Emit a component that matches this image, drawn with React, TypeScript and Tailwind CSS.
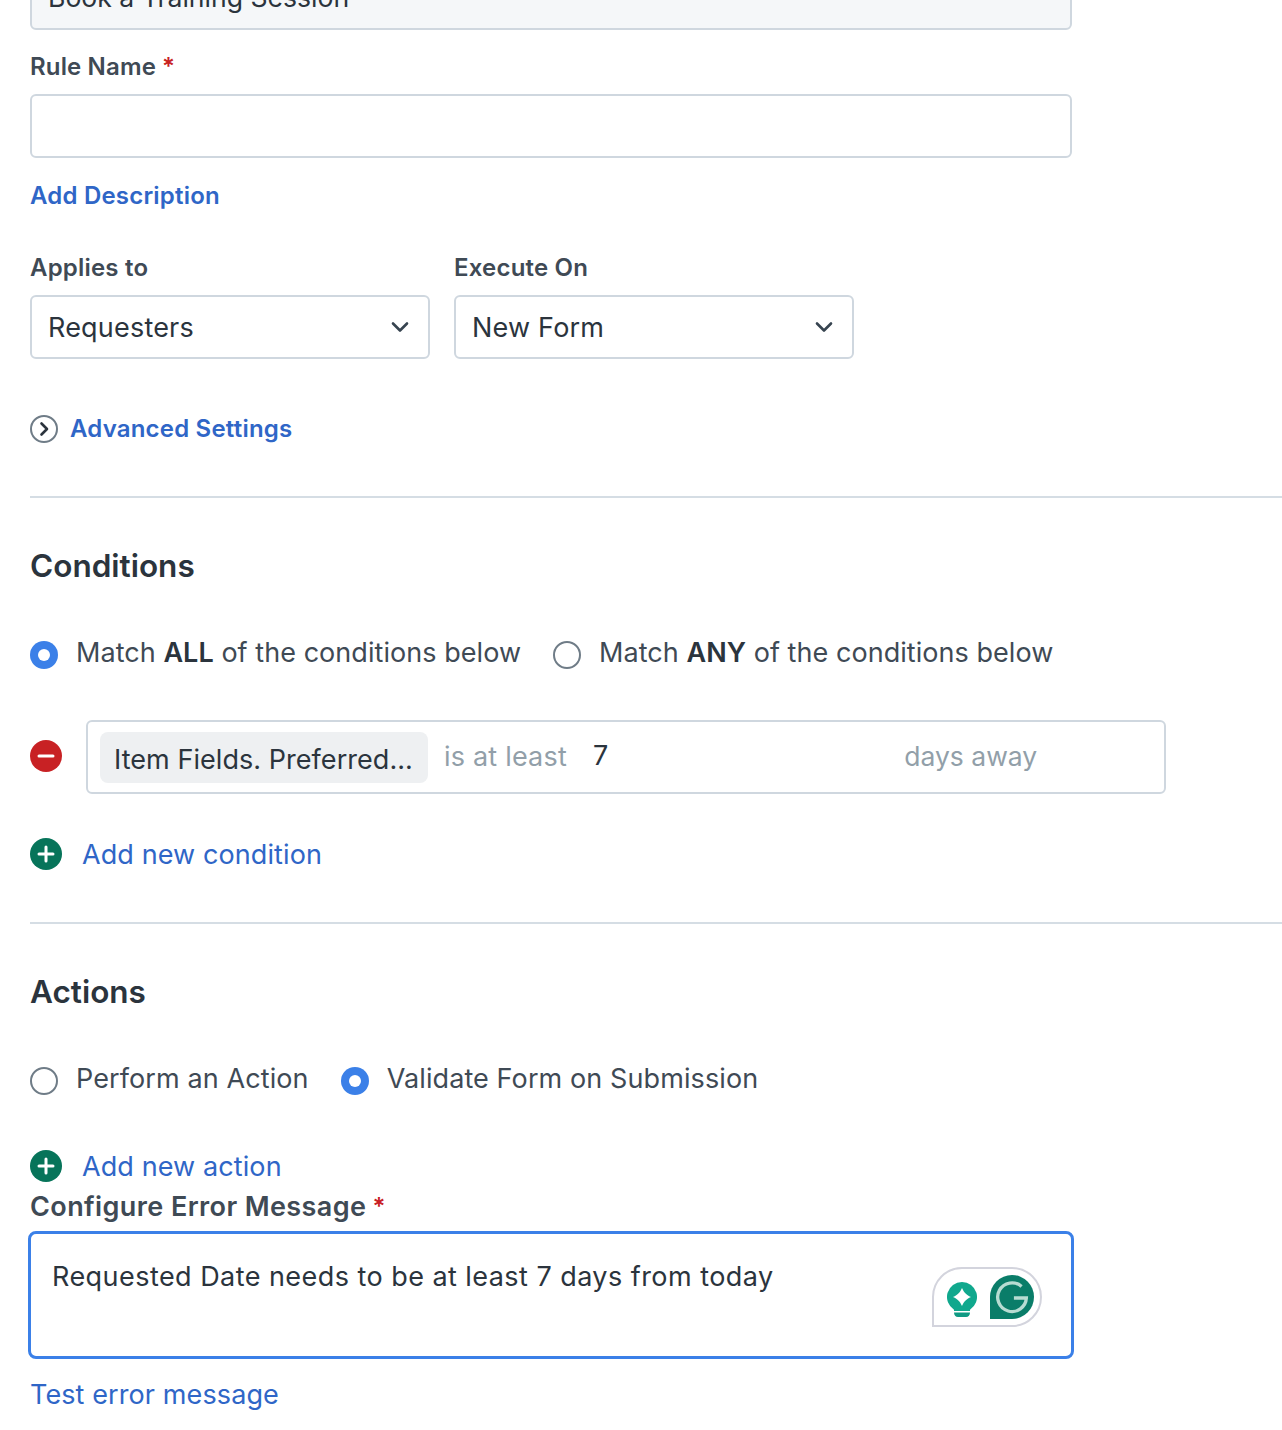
const inter = { fontFamily: 'Inter, sans-serif' };

function Radio({ checked }: { checked?: boolean }) {
  if (checked) {
    return (
      <span className="flex h-[28px] w-[28px] shrink-0 items-center justify-center rounded-full bg-[#3b80e8]">
        <span className="h-[12px] w-[12px] rounded-full bg-white" />
      </span>
    );
  }
  return <span className="h-[28px] w-[28px] shrink-0 rounded-full border-2 border-[#6f7c87] bg-white" />;
}

function RoundIcon({ type }: { type: 'plus' | 'minus' }) {
  return (
    <svg width="32" height="32" viewBox="0 0 32 32" className="shrink-0">
      <circle cx="16" cy="16" r="16" fill={type === 'plus' ? '#07745a' : '#c82124'} />
      <path d={type === 'plus' ? 'M9 16h14M16 9v14' : 'M9 16h14'} stroke="white" strokeWidth="3" strokeLinecap="round" />
    </svg>
  );
}

function Select({ value }: { value: string }) {
  return (
    <div className="flex h-[64px] w-[400px] items-center justify-between rounded-[6px] border-2 border-[#cfd7df] bg-white pl-[16px] pr-[19px] text-[27px] tracking-[0.2px] text-[#2b343d]">
      <span className="pt-[2px]">{value}</span>
      <svg width="18" height="12" viewBox="0 0 18 12" fill="none">
        <path d="M2 2.5l7 7 7-7" stroke="#374450" strokeWidth="2.6" strokeLinecap="round" strokeLinejoin="round" />
      </svg>
    </div>
  );
}

export default function App() {
  return (
    <div className="h-[1430px] overflow-hidden bg-white pl-[30px]" style={inter}>
      <div className="-mt-[34px] flex h-[64px] w-[1042px] items-center rounded-[6px] border-2 border-[#cfd7df] bg-[#f5f7f9] pl-[16px] text-[26.600px] text-[#2b343d]">
        Book a Training Session
      </div>

      <div className="mt-[20px] flex h-[34px] items-center text-[24px] font-semibold tracking-[0.15px] text-[#3f4a55]">
        Rule Name <span className="ml-[6px] text-[#c82124]">*</span>
      </div>
      <div className="mt-[10px] h-[64px] w-[1042px] rounded-[6px] border-2 border-[#cfd7df] bg-white" />
      <div className="mt-[21px] h-[34px] text-[24px] font-semibold leading-[34px] tracking-[0.2px] text-[#2f66c7]">Add Description</div>

      <div className="mt-[38px] flex gap-[24px]">
        <div>
          <div className="h-[34px] text-[24px] font-semibold leading-[34px] tracking-[0.2px] text-[#3f4a55]">Applies to</div>
          <div className="mt-[10px]"><Select value="Requesters" /></div>
        </div>
        <div>
          <div className="h-[34px] text-[24px] font-semibold leading-[34px] tracking-[0.2px] text-[#3f4a55]">Execute On</div>
          <div className="mt-[10px]"><Select value="New Form" /></div>
        </div>
      </div>

      <div className="mt-[55px] flex h-[30px] items-center">
        <svg width="28" height="28" viewBox="0 0 28 28" fill="none" className="shrink-0">
          <circle cx="14" cy="14" r="13" stroke="#6f7c87" strokeWidth="2" />
          <path d="M11.500 8.500l5.500 5.500-5.500 5.500" stroke="#2b343d" strokeWidth="2.600" strokeLinecap="round" strokeLinejoin="round" />
        </svg>
        <span className="ml-[12px] text-[24px] font-semibold tracking-[0.2px] text-[#2f66c7]">Advanced Settings</span>
      </div>

      <div className="mt-[52px] h-[2px] bg-[#d5dde4]" />

      <h2 className="mt-[48px] h-[40px] text-[31.500px] font-semibold leading-[40px] text-[#2b343d]">Conditions</h2>

      <div className="mt-[51px] flex h-[36px] items-center text-[27px] tracking-[0.05px] text-[#3f4a55]">
        <Radio checked />
        <span className="ml-[18px] pb-[4px]">Match <b className="font-semibold text-[#2b343d]">ALL</b> of the conditions below</span>
        <span className="ml-[32px] flex shrink-0"><Radio /></span>
        <span className="ml-[18px] pb-[4px]">Match <b className="font-semibold text-[#2b343d]">ANY</b> of the conditions below</span>
      </div>

      <div className="mt-[47px] flex items-center">
        <span className="flex pb-[2px]"><RoundIcon type="minus" /></span>
        <div className="ml-[24px] flex h-[74px] w-[1080px] items-center rounded-[6px] border-2 border-[#cfd7df] bg-white pl-[12px] text-[27px]">
          <span className="flex h-[51px] w-[328px] items-center rounded-[8px] bg-[#eef0f2] pl-[14px] pt-[6px] tracking-[0.05px] text-[#2b343d]">Item Fields. Preferred...</span>
          <span className="ml-[16px] tracking-[0.2px] text-[#929fa9]">is at least</span>
          <span className="ml-[26px] pb-[2px] text-[#2b343d]">7</span>
          <span className="ml-[296px] text-[26.500px] text-[#929fa9]">days away</span>
        </div>
      </div>

      <div className="mt-[42px] flex h-[36px] items-center">
        <RoundIcon type="plus" />
        <span className="ml-[20px] pt-[2px] text-[27px] tracking-[0.1px] text-[#2f66c7]">Add new condition</span>
      </div>

      <div className="mt-[50px] h-[2px] bg-[#d5dde4]" />

      <h2 className="mt-[48px] h-[40px] text-[31.500px] font-semibold leading-[40px] text-[#2b343d]">Actions</h2>

      <div className="mt-[51px] flex h-[36px] items-center text-[27px] tracking-[0.1px] text-[#3f4a55]">
        <Radio />
        <span className="ml-[18px] pb-[4px]">Perform an Action</span>
        <span className="ml-[32px] flex shrink-0"><Radio checked /></span>
        <span className="ml-[18px] pb-[4px]">Validate Form on Submission</span>
      </div>

      <div className="mt-[49px] flex h-[36px] items-center">
        <RoundIcon type="plus" />
        <span className="ml-[20px] pt-[2px] text-[27px] tracking-[0.1px] text-[#2f66c7]">Add new action</span>
      </div>

      <div className="mt-[4px] flex h-[36px] items-center pt-[2px] text-[27px] font-semibold tracking-[0.4px] text-[#3f4a55]">
        Configure Error Message <span className="ml-[6px] text-[24px] text-[#c82124]">*</span>
      </div>

      <div className="relative -ml-[2px] mt-[7px] h-[128px] w-[1046px] rounded-[8px] border-[3px] border-[#3b80e8] bg-white pl-[21px] pt-[25px] text-[27px] leading-[36px] tracking-[0.45px] text-[#2b343d]">
        Requested Date needs to be at least 7 days from today
        <div className="absolute left-[901px] top-[33px] flex h-[60px] w-[110px] items-center rounded-[30px] rounded-bl-none border-2 border-[#d3d4dd] bg-white pl-[13px]">
          <svg width="30" height="35" viewBox="0 0 30 35" className="mt-[4px]">
            <path d="M15 0a15 15 0 0 1 8 27.700V29H7v-1.300A15 15 0 0 1 15 0z" fill="#10a88d" />
            <path d="M15 6c2 4.500 4 6.700 9 9-5 2.300-7 4.500-9 9-2-4.500-4-6.700-9-9 5-2.300 7-4.500 9-9z" fill="white" />
            <path d="M7 30.500h16c0 2.500-1.500 4.500-4 4.500h-8c-2.500 0-4-2-4-4.500z" fill="#0f9a83" />
          </svg>
          <svg width="44" height="44" viewBox="0 0 46 46" className="ml-[13px]">
            <path d="M23 0a23 23 0 0 1 0 46H0V23A23 23 0 0 1 23 0z" fill="#0a7d69" />
            <path d="M33 12A15 15 0 1 0 38 24H25" fill="none" stroke="#b7dcd2" strokeWidth="3.500" />
          </svg>
        </div>
      </div>

      <div className="mt-[18px] text-[27px] leading-[36px] tracking-[0.1px] text-[#2f66c7]">Test error message</div>
    </div>
  );
}
